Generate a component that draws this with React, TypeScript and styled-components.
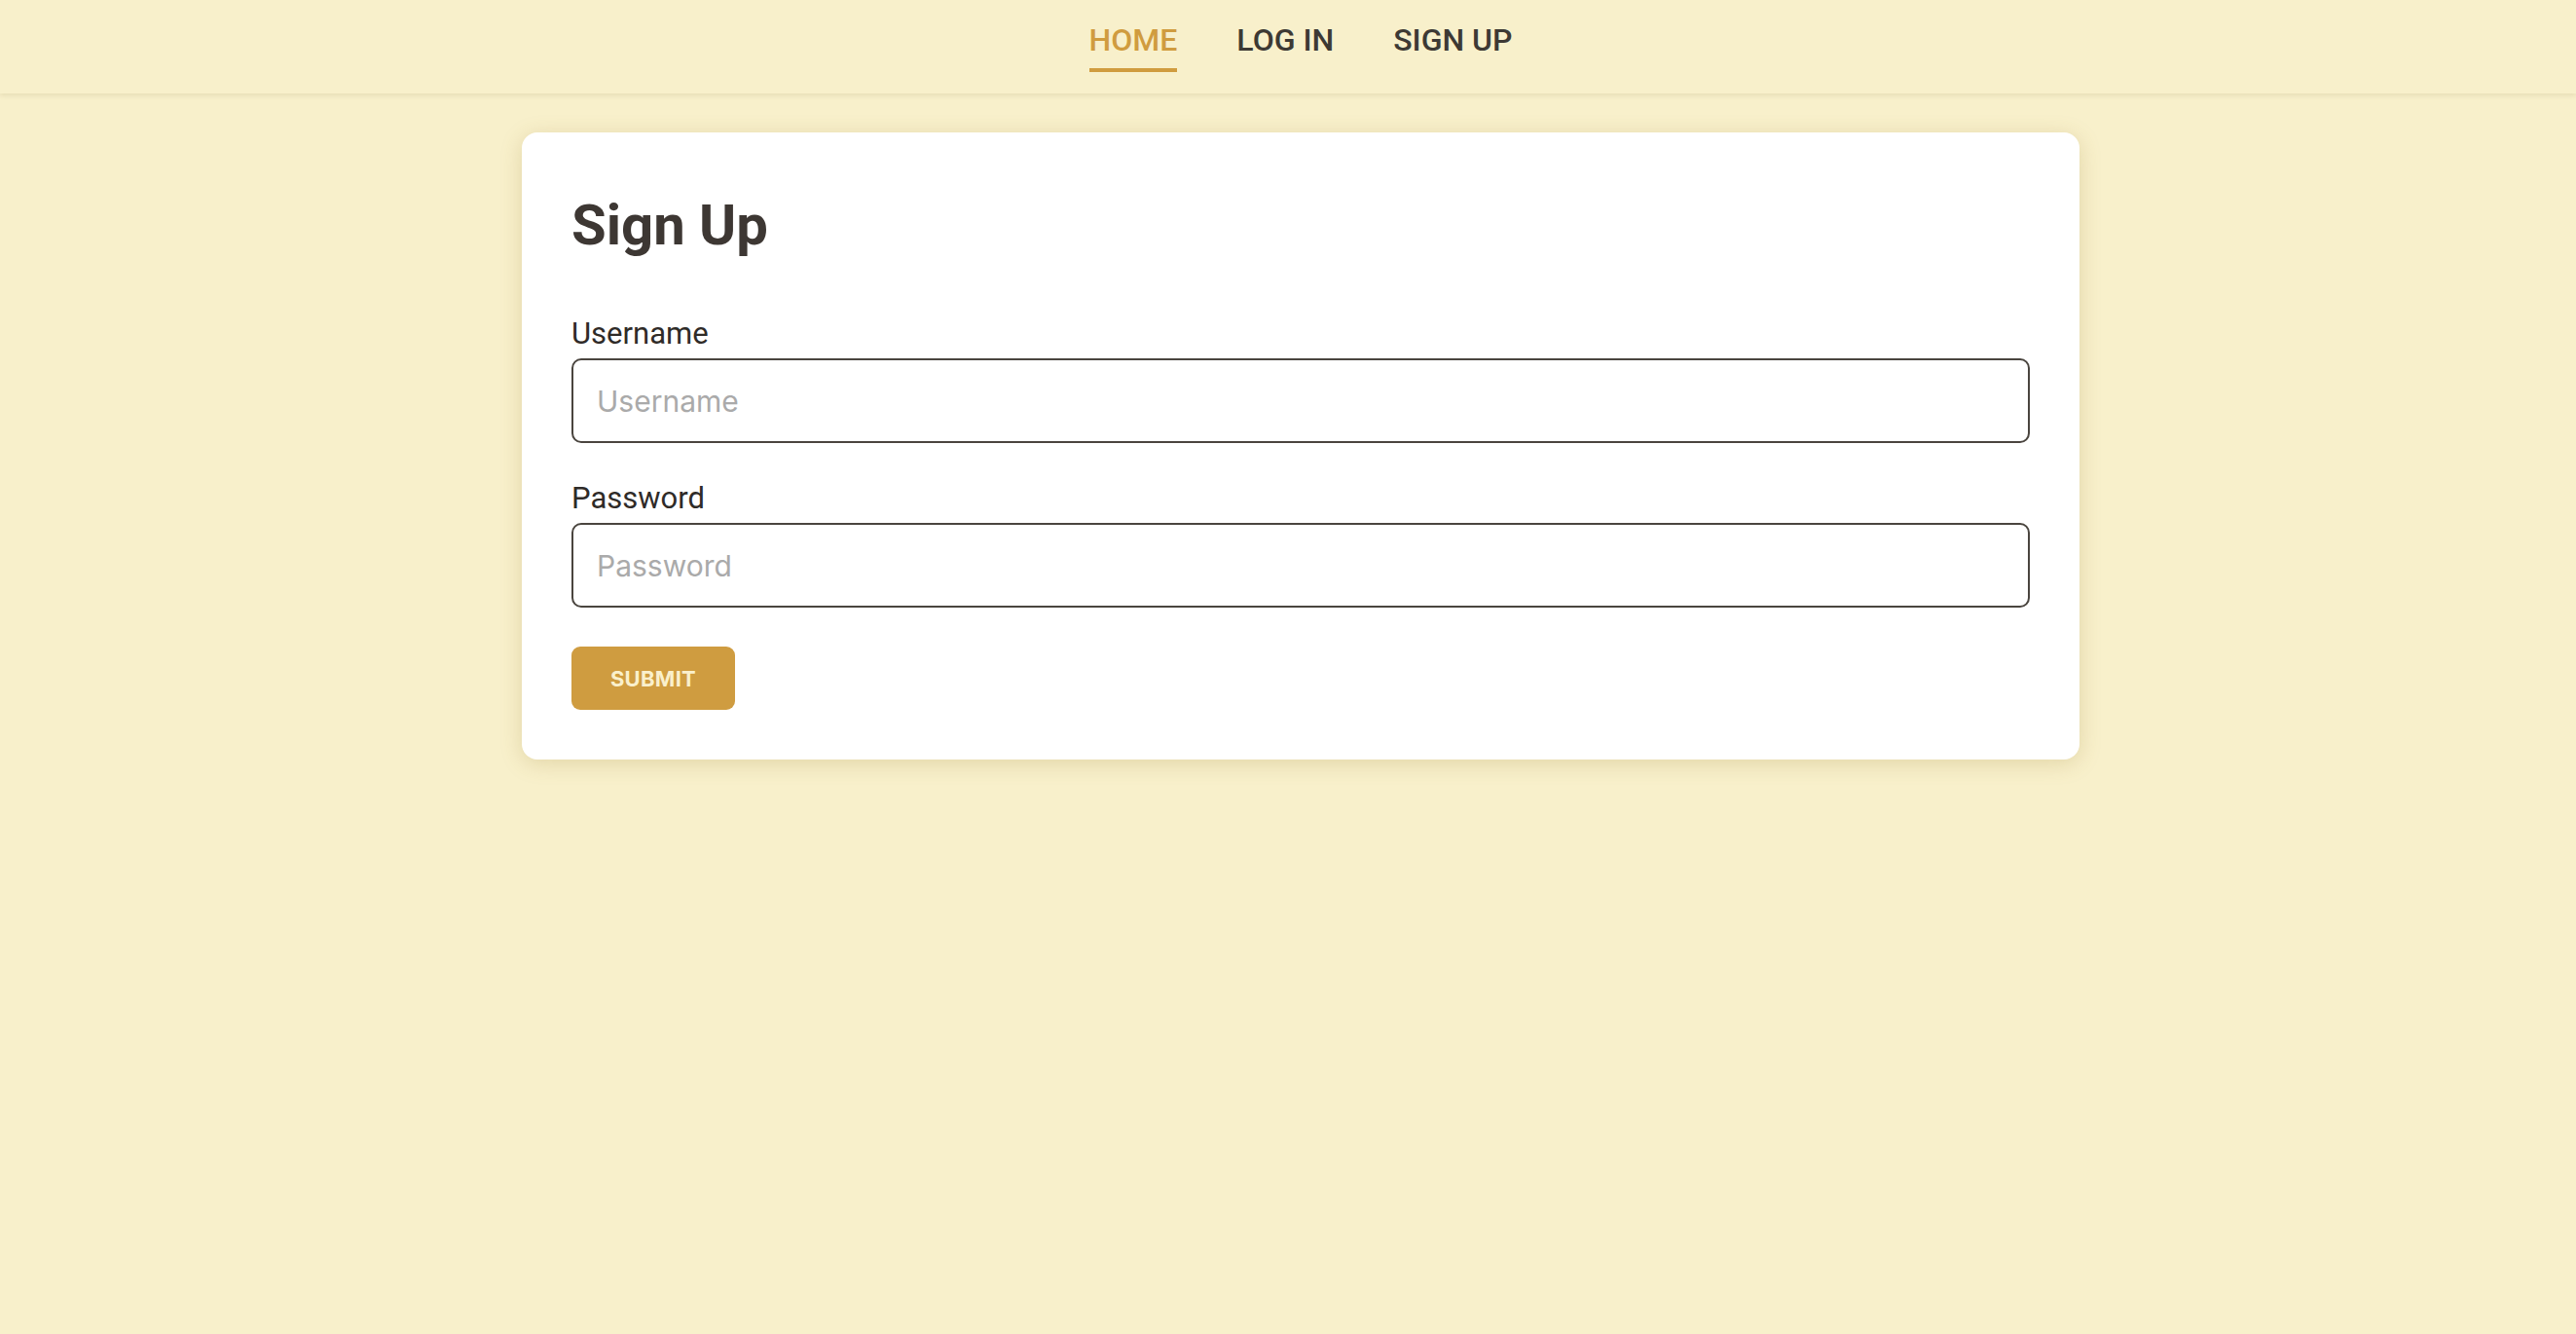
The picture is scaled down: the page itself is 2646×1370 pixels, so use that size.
import React from "react";
import styled, { createGlobalStyle } from "styled-components";

const GlobalStyle = createGlobalStyle`
  html, body {
    margin: 0;
    padding: 0;
    background: #f8f0cb;
    font-family: Roboto, "Noto Sans", sans-serif;
    color: #3d3834;
  }
  * { box-sizing: border-box; }
`;

const Page = styled.div`
  min-height: 1370px;
  background: #f8f0cb;
`;

const NavBar = styled.nav`
  height: 96px;
  background: #f8f0cb;
  box-shadow: 0 2px 5px rgba(120, 100, 40, 0.14);
  display: flex;
  justify-content: center;
  padding: 21px 0 0 26px;
  position: relative;
  z-index: 1;
`;

const NavList = styled.div`
  display: flex;
  align-items: flex-start;
  gap: 61px;
`;

const NavLink = styled.a<{ $active?: boolean }>`
  display: block;
  font-family: Roboto, sans-serif;
  font-weight: 500;
  font-size: 32px;
  line-height: 40px;
  color: ${(p) => (p.$active ? "#d09c3f" : "#3d3934")};
  text-decoration: none;
  padding-bottom: 9px;
  border-bottom: 4px solid ${(p) => (p.$active ? "#d09c3f" : "transparent")};
  cursor: pointer;
`;

const Main = styled.main`
  display: flex;
  justify-content: center;
  padding: 40px 0 0 26px;
`;

const Card = styled.form`
  width: 1600px;
  background: #ffffff;
  border-radius: 16px;
  box-shadow: 0 4px 22px rgba(150, 120, 40, 0.22);
  padding: 60px 51px 51px;
  display: flex;
  flex-direction: column;
`;

const Title = styled.h1`
  margin: 0;
  font-family: Roboto, sans-serif;
  font-weight: 700;
  font-size: 58px;
  line-height: 71px;
  color: #3d3733;
`;

const Field = styled.div<{ $top: number }>`
  display: flex;
  flex-direction: column;
  margin-top: ${(p) => p.$top}px;
`;

const Label = styled.label`
  font-family: Roboto, sans-serif;
  font-weight: 400;
  font-size: 31px;
  line-height: 37px;
  color: #2f2b28;
  margin-bottom: 7px;
`;

const Input = styled.input`
  width: 100%;
  height: 87px;
  border: 2px solid #4a453f;
  border-radius: 10px;
  padding: 0 24px;
  font-family: Inter, "Noto Sans", sans-serif;
  font-size: 30px;
  color: #2f2b28;
  background: #fff;
  outline: none;
  &::placeholder {
    color: #aaaaaa;
  }
`;

const SubmitButton = styled.button`
  align-self: flex-start;
  margin-top: 40px;
  height: 65px;
  width: 168px;
  border: none;
  border-radius: 9px;
  background: #cf9c40;
  color: #faf0cc;
  font-family: Inter, sans-serif;
  font-weight: 700;
  font-size: 22px;
  letter-spacing: 0.3px;
  cursor: pointer;
`;

export default function App() {
  return (
    <Page>
      <GlobalStyle />
      <NavBar>
        <NavList>
          <NavLink $active>HOME</NavLink>
          <NavLink>LOG IN</NavLink>
          <NavLink>SIGN UP</NavLink>
        </NavList>
      </NavBar>
      <Main>
        <Card onSubmit={(e) => e.preventDefault()}>
          <Title>Sign Up</Title>
          <Field $top={57}>
            <Label htmlFor="username">Username</Label>
            <Input id="username" placeholder="Username" />
          </Field>
          <Field $top={38}>
            <Label htmlFor="password">Password</Label>
            <Input id="password" type="password" placeholder="Password" />
          </Field>
          <SubmitButton type="submit">SUBMIT</SubmitButton>
        </Card>
      </Main>
    </Page>
  );
}
